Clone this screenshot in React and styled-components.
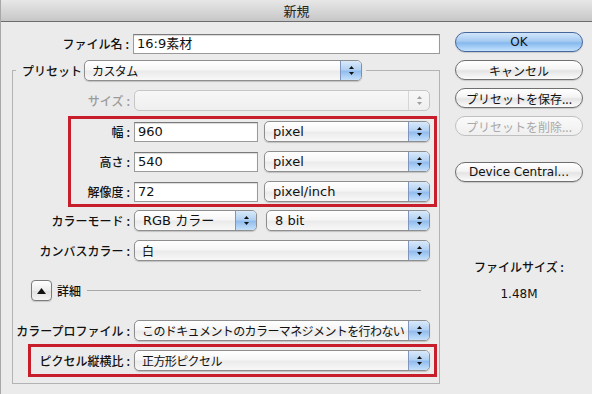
import React from "react";
import styled, { createGlobalStyle, css } from "styled-components";

const GlobalStyle = createGlobalStyle`
  body {
    margin: 0;
    background: #ebebeb;
  }
`;

const jp = `"Noto Sans CJK JP", "DejaVu Sans", sans-serif`;
const latin = `"DejaVu Sans", "Noto Sans CJK JP", sans-serif`;

const Window = styled.div`
  width: 592px;
  height: 394px;
  box-sizing: border-box;
  background: #ebebeb;
  border-left: 1px solid #a8a8a8;
  font-family: ${jp};
  color: #111;
  overflow: hidden;
`;

const TitleBar = styled.div`
  height: 22px;
  box-sizing: border-box;
  border-bottom: 1px solid #6d6d6d;
  background: linear-gradient(#e7e7e7, #c7c7c7);
  display: flex;
  align-items: center;
  justify-content: center;
  font-size: 13px;
  color: #222;
`;

const Body = styled.div`
  display: flex;
`;

const Main = styled.div`
  width: 454px;
  display: flex;
  flex-direction: column;
`;

const Side = styled.div`
  width: 128px;
  padding-top: 10px;
  display: flex;
  flex-direction: column;
  gap: 8px;
`;

const Row = styled.div`
  display: flex;
  align-items: center;
  height: 21px;
  margin-top: ${(p) => p.mt || 0}px;
`;

const Fields = styled.div`
  display: flex;
  align-items: center;
  gap: ${(p) => p.gap || 0}px;
`;

const LabelBox = styled.div`
  width: ${(p) => p.w}px;
  margin-right: 4px;
  text-align: right;
  font-size: 12px;
  font-weight: 500;
  line-height: 1;
  white-space: nowrap;
  color: ${(p) => (p.disabled ? "#9b9b9b" : "#111")};
`;

const Colon = styled.span`
  margin-left: 3px;
`;

const Label = ({ w, disabled, children }) => (
  <LabelBox w={w} disabled={disabled}>
    {children}
    <Colon>:</Colon>
  </LabelBox>
);

const TextInput = styled.div`
  width: ${(p) => p.w}px;
  height: 20px;
  box-sizing: border-box;
  background: #fff;
  border: 1px solid #9a9a9a;
  border-top-color: #7a7a7a;
  box-shadow: inset 0 1px 1px rgba(0, 0, 0, 0.15);
  display: flex;
  align-items: center;
  padding-left: 3px;
  font-family: ${latin};
  font-size: 13px;
  line-height: 1;
`;

const SelectBox = styled.div`
  width: ${(p) => p.w}px;
  height: 21px;
  box-sizing: border-box;
  display: flex;
  border-radius: 5px;
  border: 1px solid #8e8e8e;
  box-shadow: 0 1px 1px rgba(0, 0, 0, 0.18);
  background: linear-gradient(#ffffff, #f6f6f6 45%, #ebebeb 55%, #f8f8f8);
  overflow: hidden;
  ${(p) =>
    p.disabled &&
    css`
      border-color: #c6c6c6;
      box-shadow: none;
      background: linear-gradient(#f7f7f7, #efefef);
    `}
`;

const SelectText = styled.div`
  flex: 1;
  min-width: 0;
  display: flex;
  align-items: center;
  padding-left: ${(p) => (p.jp ? 7 : 8)}px;
  font-family: ${(p) => (p.jp ? jp : latin)};
  font-size: ${(p) => (p.jp ? 12 : 13)}px;
  letter-spacing: ${(p) => (p.jp ? -0.6 : 0)}px;
  line-height: 1;
  white-space: nowrap;
  overflow: hidden;
`;

const Stepper = styled.div`
  width: 20px;
  flex-shrink: 0;
  display: flex;
  align-items: center;
  justify-content: center;
  border-left: 1px solid #7f95bd;
  background: linear-gradient(#d9e9fa, #b3d1f2 45%, #92bdee 55%, #c6e1fb);
  color: #111;
  ${(p) =>
    p.disabled &&
    css`
      border-left-color: #d6d6d6;
      background: transparent;
      color: #a0a0a0;
    `}
`;

const Arrows = () => (
  <svg width="7" height="11" viewBox="0 0 7 11">
    <polygon points="1,4 3.5,1 6,4" fill="currentColor" />
    <polygon points="1,7 6,7 3.5,10" fill="currentColor" />
  </svg>
);

const Select = ({ w, children, disabled, jp: isJp }) => (
  <SelectBox w={w} disabled={disabled}>
    <SelectText jp={isJp}>{children}</SelectText>
    <Stepper disabled={disabled}>
      <Arrows />
    </Stepper>
  </SelectBox>
);

const Group = styled.fieldset`
  margin: 6px 0 0 11px;
  width: 428px;
  height: 324px;
  box-sizing: border-box;
  padding: 9px 0 0 0;
  border: 1px solid #b3b3b3;
  min-width: 0;
  display: flex;
  flex-direction: column;
`;

const Legend = styled.legend`
  margin-left: 3px;
  padding: 0 4px 0 6px;
  display: flex;
  align-items: center;
`;

const RedBox = styled.div`
  margin-left: ${(p) => p.ml}px;
  margin-top: ${(p) => p.mt}px;
  width: ${(p) => p.w}px;
  box-sizing: border-box;
  border: 3px solid #c81d2b;
  padding: ${(p) => p.pad};
  display: flex;
  flex-direction: column;
  gap: 9px;
`;

const Details = styled.div`
  display: flex;
  align-items: center;
  margin: 19px 18px 0 18px;
`;

const Disclosure = styled.div`
  width: 21px;
  height: 21px;
  box-sizing: border-box;
  border: 1px solid #7c7c7c;
  border-radius: 4px;
  background: linear-gradient(#ffffff, #ececec 50%, #e0e0e0 51%, #f4f4f4);
  box-shadow: 0 1px 1px rgba(0, 0, 0, 0.15);
  display: flex;
  align-items: center;
  justify-content: center;
`;

const DetailsText = styled.div`
  margin-left: 5px;
  font-size: 12px;
  font-weight: 500;
`;

const Rule = styled.div`
  flex: 1;
  height: 1px;
  margin-left: 6px;
  background: #a8a8a8;
`;

const Button = styled.div`
  height: 20px;
  box-sizing: border-box;
  border-radius: 10px;
  border: 1px solid #6f6f6f;
  background: linear-gradient(#ffffff, #f4f4f4 45%, #e4e4e4 55%, #fbfbfb);
  box-shadow: 0 1px 1px rgba(0, 0, 0, 0.15);
  display: flex;
  align-items: center;
  justify-content: center;
  font-size: 12px;
  font-family: ${(p) => (p.latin ? latin : jp)};
  white-space: nowrap;
  margin-top: ${(p) => p.mt || 0}px;
  ${(p) =>
    p.primary &&
    css`
      border-color: #46679c;
      background: linear-gradient(#d3e6fa, #a6cbf1 45%, #86b8ee 55%, #c3e2fd);
    `}
  ${(p) =>
    p.disabled &&
    css`
      border-color: #c0c0c0;
      color: #a9a9a9;
      box-shadow: none;
      background: linear-gradient(#fafafa, #efefef);
    `}
`;

const SizeInfo = styled.div`
  margin-top: ${(p) => p.mt}px;
  text-align: center;
  font-size: 12px;
  font-weight: 500;
  font-family: ${(p) => (p.latin ? latin : jp)};
`;

export default function App() {
  return (
    <>
      <GlobalStyle />
      <Window>
        <TitleBar>新規</TitleBar>
        <Body>
          <Main>
            <Row mt={11}>
              <Label w={128}>ファイル名</Label>
              <TextInput w={307}>16:9素材</TextInput>
            </Row>
            <Group>
              <Legend>
                <Label w={58}>プリセット</Label>
                <Select w={278} jp>カスタム</Select>
              </Legend>
              <Row>
                <Label w={117} disabled>サイズ</Label>
                <Select w={296} disabled></Select>
              </Row>
              <RedBox ml={55} mt={5} w={369} pad="2px 0">
                <Row>
                  <Label w={59}>幅</Label>
                  <Fields gap={6}>
                    <TextInput w={124}>960</TextInput>
                    <Select w={166}>pixel</Select>
                  </Fields>
                </Row>
                <Row>
                  <Label w={59}>高さ</Label>
                  <Fields gap={6}>
                    <TextInput w={124}>540</TextInput>
                    <Select w={166}>pixel</Select>
                  </Fields>
                </Row>
                <Row>
                  <Label w={59}>解像度</Label>
                  <Fields gap={6}>
                    <TextInput w={124}>72</TextInput>
                    <Select w={166}>pixel/inch</Select>
                  </Fields>
                </Row>
              </RedBox>
              <Row mt={3}>
                <Label w={117}>カラーモード</Label>
                <Fields gap={9}>
                  <Select w={123}>RGB カラー</Select>
                  <Select w={164}>8 bit</Select>
                </Fields>
              </Row>
              <Row mt={9}>
                <Label w={117}>カンバスカラー</Label>
                <Select w={296} jp>白</Select>
              </Row>
              <Details>
                <Disclosure>
                  <svg width="9" height="6" viewBox="0 0 9 6">
                    <polygon points="0,6 4.5,0 9,6" fill="#111" />
                  </svg>
                </Disclosure>
                <DetailsText>詳細</DetailsText>
                <Rule />
              </Details>
              <Row mt={19}>
                <Label w={117}>カラープロファイル</Label>
                <Select w={296} jp>このドキュメントのカラーマネジメントを行わない</Select>
              </Row>
              <RedBox ml={15} mt={3} w={409} pad="3px 0">
                <Row>
                  <Label w={99}>ピクセル縦横比</Label>
                  <Select w={296} jp>正方形ピクセル</Select>
                </Row>
              </RedBox>
            </Group>
          </Main>
          <Side>
            <Button primary latin>OK</Button>
            <Button>キャンセル</Button>
            <Button>プリセットを保存...</Button>
            <Button disabled>プリセットを削除...</Button>
            <Button latin mt={18}>Device Central...</Button>
            <SizeInfo mt={68}>ファイルサイズ :</SizeInfo>
            <SizeInfo latin mt={4}>1.48M</SizeInfo>
          </Side>
        </Body>
      </Window>
    </>
  );
}
